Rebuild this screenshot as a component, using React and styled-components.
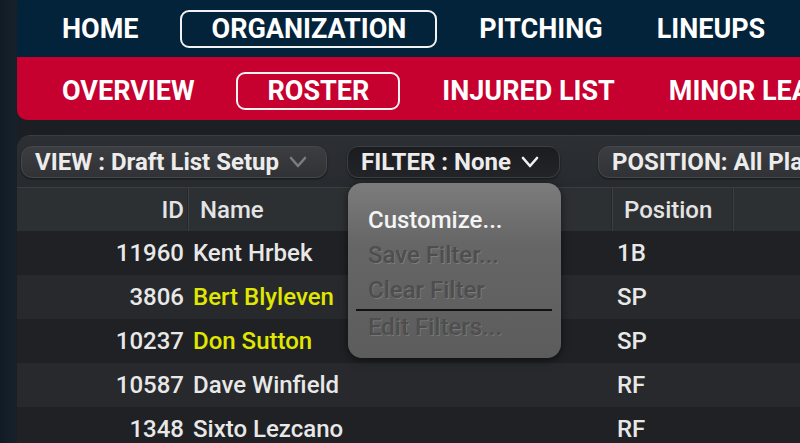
import React from "react";
import styled, { createGlobalStyle } from "styled-components";

const Global = createGlobalStyle`
  html, body { margin: 0; padding: 0; background: #1b1e22; overflow: hidden; }
  * { box-sizing: border-box; }
`;

const Page = styled.div`
  width: 800px;
  height: 443px;
  overflow: hidden;
  position: relative;
  font-family: Roboto, "Noto Sans", Arial, sans-serif;
  background: linear-gradient(90deg, #111b24 0px, #16202a 12px, #1b1e22 22px, #1c1f23 100%);
  padding-left: 17px;
  display: flex;
  flex-direction: column;
`;

const NavPanel = styled.div`
  width: 820px;
  border-radius: 10px;
  overflow: hidden;
  margin-top: -4px;
  flex: none;
`;

const NavRow = styled.div`
  height: ${(p) => p.$h}px;
  background: ${(p) => p.$bg};
  display: flex;
  align-items: center;
  padding-left: 13px;
  padding-top: ${(p) => p.$pt || 0}px;
  gap: 10px;
`;

const NavItem = styled.div`
  height: 38px;
  display: flex;
  align-items: center;
  padding: 0 29px 0 30px;
  margin-right: ${(p) => p.$mr || 0}px;
  border: 2px solid ${(p) => (p.$active ? "#f2f2f2" : "transparent")};
  border-radius: 9px;
  color: #fff;
  font-size: 27px;
  font-weight: 700;
  white-space: nowrap;
  flex: none;
`;

const Content = styled.div`
  margin-top: 15px;
  flex: 1;
  width: 800px;
  background: #1f2225;
  border-top-left-radius: 14px;
  border-top: 1px solid #3a3d41;
  overflow: hidden;
  display: flex;
  flex-direction: column;
`;

const Toolbar = styled.div`
  flex: none;
  height: 51px;
  background: linear-gradient(180deg, #2c2f33 0%, #272a2e 100%);
  display: flex;
  align-items: center;
  padding-left: 4px;
  padding-top: 1px;
`;

const Pill = styled.div`
  height: 32px;
  display: flex;
  align-items: center;
  gap: 10px;
  padding: 0 16px 0 13px;
  margin-right: ${(p) => p.$mr || 0}px;
  border-radius: 11px;
  background: ${(p) => (p.$dark ? "linear-gradient(180deg,#1a1c1f,#222427)" : "linear-gradient(180deg,#3b3d40,#303235)")};
  border: 1px solid ${(p) => (p.$dark ? "#3c3f43" : "#45484c")};
  box-shadow: 0 1px 2px rgba(0,0,0,0.5);
  color: #ececec;
  font-size: 24px;
  font-weight: 700;
  white-space: nowrap;
  width: ${(p) => (p.$w ? p.$w + "px" : "auto")};
  flex: none;
`;

const Chevron = ({ color }) => (
  <svg width="18" height="12" viewBox="0 0 18 12">
    <polyline points="2,2 9,10 16,2" fill="none" stroke={color} strokeWidth="2.6" strokeLinecap="round" strokeLinejoin="round" />
  </svg>
);

const Grid = styled.div`
  flex: none;
  display: grid;
  grid-template-columns: 171px 424px 121px 1fr;
`;

const HeaderRow = styled(Grid)`
  height: 44px;
  background: #2d3033;
  border-top: 1px solid #3b3e42;
`;

const HeadCell = styled.div`
  display: flex;
  align-items: center;
  justify-content: ${(p) => (p.$right ? "flex-end" : "flex-start")};
  padding: ${(p) => (p.$right ? "0 3px 0 0" : "0 0 0 11px")};
  color: #e4e4e4;
  font-size: 24px;
  font-weight: 500;
  border-left: ${(p) => (p.$first ? "none" : "1px solid #3c3f43")};
  border-right: 1px solid #26282b;
`;

const Row = styled(Grid)`
  height: 44px;
  background: ${(p) => (p.$alt ? "#27292c" : "#1f2124")};
`;

const Cell = styled.div`
  display: flex;
  align-items: center;
  justify-content: ${(p) => (p.$right ? "flex-end" : "flex-start")};
  padding: ${(p) => (p.$right ? "0 4px 0 0" : "0 0 0 5px")};
  color: ${(p) => (p.$yellow ? "#e0e800" : "#e8e8e8")};
  font-size: 24px;
  font-weight: 500;
  white-space: nowrap;
`;

const Menu = styled.div`
  position: absolute;
  left: 348px;
  top: 183px;
  width: 213px;
  height: 175px;
  border-radius: 14px;
  background: linear-gradient(180deg, #7c7c7c 0%, #666 35%, #5c5c5c 100%);
  box-shadow: 0 2px 8px rgba(0,0,0,0.55);
  padding-top: 19px;
  display: flex;
  flex-direction: column;
`;

const MenuItem = styled.div`
  height: ${(p) => p.$h || 35}px;
  display: flex;
  align-items: center;
  padding-left: 20px;
  font-size: 24px;
  font-weight: 500;
  color: ${(p) => (p.$disabled ? "#4e4e4e" : "#f4f4f4")};
  text-shadow: ${(p) => (p.$disabled ? "1px 1px 0 rgba(255,255,255,0.16)" : "none")};
`;

const Separator = styled.div`
  height: 1.5px;
  margin: 2px 9px 0 8px;
  background: #111;
`;

const rows = [
  { id: "11960", name: "Kent Hrbek", pos: "1B" },
  { id: "3806", name: "Bert Blyleven", pos: "SP", y: true },
  { id: "10237", name: "Don Sutton", pos: "SP", y: true },
  { id: "10587", name: "Dave Winfield", pos: "RF" },
  { id: "1348", name: "Sixto Lezcano", pos: "RF" },
];

export default function App() {
  return (
    <>
      <Global />
      <Page>
        <NavPanel>
          <NavRow $h={61} $bg="#03233a" $pt={4}>
            <NavItem>HOME</NavItem>
            <NavItem $active>ORGANIZATION</NavItem>
            <NavItem $mr={-19}>PITCHING</NavItem>
            <NavItem>LINEUPS</NavItem>
          </NavRow>
          <NavRow $h={63} $bg="#c6002f" $pt={4}>
            <NavItem>OVERVIEW</NavItem>
            <NavItem $active>ROSTER</NavItem>
            <NavItem $mr={-19}>INJURED LIST</NavItem>
            <NavItem>MINOR LEAGUES</NavItem>
          </NavRow>
        </NavPanel>
        <Content>
          <Toolbar>
            <Pill $w={306} $mr={20}>
              VIEW : Draft List Setup <Chevron color="#7a7c7f" />
            </Pill>
            <Pill $dark $w={213} $mr={38}>
              FILTER : None <Chevron color="#f0f0f0" />
            </Pill>
            <Pill>POSITION: All Players</Pill>
          </Toolbar>
          <HeaderRow>
            <HeadCell $right $first>ID</HeadCell>
            <HeadCell>Name</HeadCell>
            <HeadCell>Position</HeadCell>
            <HeadCell />
          </HeaderRow>
          {rows.map((r, i) => (
            <Row key={r.id} $alt={i % 2 === 1}>
              <Cell $right>{r.id}</Cell>
              <Cell $yellow={r.y}>{r.name}</Cell>
              <Cell>{r.pos}</Cell>
              <Cell />
            </Row>
          ))}
        </Content>
        <Menu>
          <MenuItem>Customize...</MenuItem>
          <MenuItem $disabled>Save Filter...</MenuItem>
          <MenuItem $disabled>Clear Filter</MenuItem>
          <Separator />
          <MenuItem $disabled $h={33}>Edit Filters...</MenuItem>
        </Menu>
      </Page>
    </>
  );
}
